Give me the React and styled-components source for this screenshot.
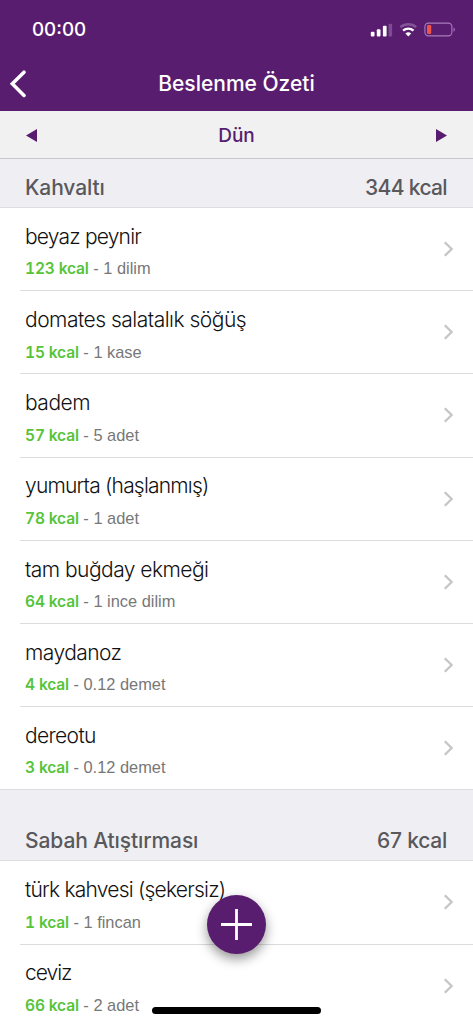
import React from 'react';
import styled, {createGlobalStyle} from 'styled-components';

const meals = [
  {
    title: 'Kahvaltı',
    total: '344 kcal',
    totalTracking: -0.65,
    height: 49,
    foods: [
      {name: 'beyaz peynir', kcal: '123 kcal', amount: '1 dilim', tracking: -0.8},
      {name: 'domates salatalık söğüş', kcal: '15 kcal', amount: '1 kase', tracking: -0.5},
      {name: 'badem', kcal: '57 kcal', amount: '5 adet', tracking: -0.5},
      {name: 'yumurta (haşlanmış)', kcal: '78 kcal', amount: '1 adet', tracking: -0.8},
      {name: 'tam buğday ekmeği', kcal: '64 kcal', amount: '1 ince dilim', tracking: -0.54},
      {name: 'maydanoz', kcal: '4 kcal', amount: '0.12 demet', tracking: -0.55},
      {name: 'dereotu', kcal: '3 kcal', amount: '0.12 demet', tracking: -0.65},
    ],
  },
  {
    title: 'Sabah Atıştırması',
    total: '67 kcal',
    totalTracking: -0.25,
    height: 71,
    foods: [
      {name: 'türk kahvesi (şekersiz)', kcal: '1 kcal', amount: '1 fincan', tracking: -0.78},
      {name: 'ceviz', kcal: '66 kcal', amount: '2 adet', tracking: -1},
    ],
  },
];

const StatusIcons = () => (
  <svg width="86" height="16" viewBox="0 0.6 86 16" fill="none">
    <rect x="0.8" y="10.3" width="3.7" height="4.8" rx="1" fill="#fff" />
    <rect x="6.8" y="7.8" width="3.7" height="7.3" rx="1" fill="#fff" />
    <rect x="12.9" y="4.4" width="3.7" height="10.7" rx="1" fill="#fff" />
    <rect x="18.6" y="2.4" width="3.5" height="12.7" rx="1" fill="#fff" opacity="0.22" />
    <path d="M30.4 5.8a12 12 0 0 1 15.8 0" stroke="#fff" strokeWidth="2.4" opacity="0.25" />
    <path d="M33.1 9.2a7.8 7.8 0 0 1 10.4 0" stroke="#fff" strokeWidth="2.4" />
    <path d="M35.4 12.2a4.4 4.4 0 0 1 5.8 0L38.3 15.2z" fill="#fff" />
    <rect x="54.9" y="1.7" width="27" height="12.8" rx="3.6" stroke="#a67cb8" strokeWidth="1.1" />
    <rect x="57" y="3.6" width="4.2" height="9" rx="1.2" fill="#ee5548" />
    <path d="M83.5 6v4.4c1.8-.7 1.8-3.7 0-4.4z" fill="#a67cb8" />
  </svg>
);

const App = () => {
  return (
    <ScPage>
      <GlobalStyle />
      <ScHeader>
        <ScStatusBar>
          <ScClock>00:00</ScClock>
          <StatusIcons />
        </ScStatusBar>
        <ScNavBar>
          <ScBackButton aria-label="Geri">
            <svg width="18" height="28" viewBox="0 0 18 28" fill="none">
              <path d="M15 2.2L3.3 13.8l11.7 11.7" stroke="#fff" strokeWidth="3.5" strokeLinecap="round" />
            </svg>
          </ScBackButton>
          <ScTitle>Beslenme Özeti</ScTitle>
        </ScNavBar>
      </ScHeader>
      <ScDateBar>
        <ScArrow aria-label="Önceki gün">
          <svg width="11" height="13" viewBox="0 0 11 13">
            <path d="M11 0v13L0 6.5z" fill="#571c6f" />
          </svg>
        </ScArrow>
        <ScDay>Dün</ScDay>
        <ScArrow aria-label="Sonraki gün">
          <svg width="11" height="13" viewBox="0 0 11 13">
            <path d="M0 0v13l11-6.5z" fill="#571c6f" />
          </svg>
        </ScArrow>
      </ScDateBar>
      {meals.map((meal) => (
        <section key={meal.title}>
          <ScMealHeader $height={meal.height}>
            <ScMealTitle>{meal.title}</ScMealTitle>
            <ScMealTotal $tracking={meal.totalTracking}>{meal.total}</ScMealTotal>
          </ScMealHeader>
          {meal.foods.map((food, i) => (
            <ScFood key={food.name} $last={i === meal.foods.length - 1}>
              <div>
                <ScFoodName $tracking={food.tracking}>{food.name}</ScFoodName>
                <ScDetail>
                  <ScKcal>{food.kcal}</ScKcal> - {food.amount}
                </ScDetail>
              </div>
              <svg width="12" height="18" viewBox="0 0 12 18" fill="none">
                <path d="M1.8 2.2L8.6 9l-6.8 6.8" stroke="#c5c5c9" strokeWidth="2.3" />
              </svg>
            </ScFood>
          ))}
        </section>
      ))}
      <ScAddButton aria-label="Ekle">
        <svg width="31" height="31" viewBox="0 0 31 31">
          <path d="M15.5 0v31M0 15.5h31" stroke="#fff" strokeWidth="2.8" />
        </svg>
      </ScAddButton>
      <ScHomeBar />
    </ScPage>
  );
};

const GlobalStyle = createGlobalStyle`
  * {
    box-sizing: border-box;
  }
  body {
    margin: 0;
    background: #fff;
    font-family: Inter, 'Liberation Sans', sans-serif;
  }
  button {
    border: none;
    padding: 0;
    background: none;
    cursor: pointer;
  }
  svg {
    display: block;
    flex-shrink: 0;
  }
`;

const ScPage = styled.div`
  position: relative;
  height: 1024px;
  overflow: hidden;
  background: #fff;
`;

const ScHeader = styled.header`
  height: 111px;
  background: #591d70;
  color: #fff;
`;

const ScStatusBar = styled.div`
  display: flex;
  justify-content: space-between;
  align-items: center;
  height: 56px;
  padding: 3px 17px 0 32px;
`;

const ScClock = styled.span`
  font-size: 18.8px;
  font-weight: 500;
`;

const ScNavBar = styled.div`
  display: grid;
  grid-template-columns: 40px 1fr 40px;
  align-items: center;
  height: 55px;
`;

const ScBackButton = styled.button`
  padding-left: 9px;
`;

const ScTitle = styled.h1`
  margin: 0;
  font-size: 21px;
  font-weight: 500;
  text-align: center;
`;

const ScDateBar = styled.div`
  display: flex;
  justify-content: space-between;
  align-items: center;
  height: 48px;
  padding: 1px 26px 0;
  background: #f1f1f1;
  border-bottom: 1px solid #c8c8ca;
`;

const ScArrow = styled.button`
  display: block;
`;

const ScDay = styled.span`
  color: #571c6f;
  font-size: 19px;
  font-weight: 500;
`;

const ScMealHeader = styled.div`
  display: flex;
  justify-content: space-between;
  align-items: flex-end;
  height: ${(props) => props.$height}px;
  padding: 0 26px 6px 25px;
  background: #efeef3;
  border-bottom: 1px solid #dddce1;
  color: #59595c;
  font-size: 21px;
  font-weight: 500;
  line-height: 26px;
`;

const ScMealTitle = styled.span`
  letter-spacing: -0.1px;
`;

const ScMealTotal = styled.span`
  letter-spacing: ${(props) => props.$tracking}px;
`;

const ScFood = styled.div`
  display: flex;
  justify-content: space-between;
  align-items: center;
  height: 83.2px;
  margin-left: ${(props) => (props.$last ? 0 : 20)}px;
  padding: 0 18px 0 ${(props) => (props.$last ? 25 : 5)}px;
  border-bottom: 1px solid #dcdcde;
`;

const ScFoodName = styled.div`
  padding-top: 5px;
  color: #111;
  font-size: 21px;
  font-weight: 300;
  line-height: 29px;
  letter-spacing: ${(props) => props.$tracking}px;
`;

const ScDetail = styled.div`
  margin-top: 5.5px;
  color: #777;
  font-family: 'Liberation Sans', Arial, sans-serif;
  font-size: 16.4px;
  line-height: 24px;
`;

const ScKcal = styled.span`
  color: #55c43a;
  font-family: Inter, sans-serif;
  font-weight: 600;
  font-size: 15.5px;
  letter-spacing: -0.15px;
  font-variant-numeric: tabular-nums;
`;

const ScAddButton = styled.button`
  position: absolute;
  top: 895px;
  left: 207px;
  display: flex;
  justify-content: center;
  align-items: center;
  width: 59px;
  height: 59px;
  border-radius: 50%;
  background: #591d70;
  box-shadow: 0 5px 12px rgba(0, 0, 0, 0.42);
`;

const ScHomeBar = styled.div`
  position: absolute;
  bottom: 10px;
  left: 152px;
  width: 169px;
  height: 7px;
  border-radius: 4px;
  background: #000;
`;

export default App;
